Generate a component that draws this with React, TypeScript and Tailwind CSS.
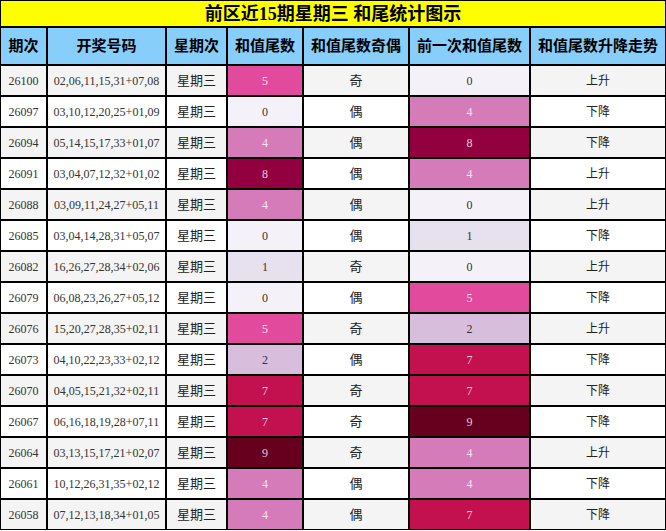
import React from "react";

type Row = [string, string, number, string, number, string];

const rows: Row[] = [
  ["26100", "02,06,11,15,31+07,08", 5, "奇", 0, "上升"],
  ["26097", "03,10,12,20,25+01,09", 0, "偶", 4, "下降"],
  ["26094", "05,14,15,17,33+01,07", 4, "偶", 8, "下降"],
  ["26091", "03,04,07,12,32+01,02", 8, "偶", 4, "上升"],
  ["26088", "03,09,11,24,27+05,11", 4, "偶", 0, "上升"],
  ["26085", "03,04,14,28,31+05,07", 0, "偶", 1, "下降"],
  ["26082", "16,26,27,28,34+02,06", 1, "奇", 0, "上升"],
  ["26079", "06,08,23,26,27+05,12", 0, "偶", 5, "下降"],
  ["26076", "15,20,27,28,35+02,11", 5, "奇", 2, "上升"],
  ["26073", "04,10,22,23,33+02,12", 2, "偶", 7, "下降"],
  ["26070", "04,05,15,21,32+02,11", 7, "奇", 7, "下降"],
  ["26067", "06,16,18,19,28+07,11", 7, "奇", 9, "下降"],
  ["26064", "03,13,15,17,21+02,07", 9, "奇", 4, "上升"],
  ["26061", "10,12,26,31,35+02,12", 4, "偶", 4, "下降"],
  ["26058", "07,12,13,18,34+01,05", 4, "偶", 7, "下降"],
];

const heat: Record<number, string> = {
  0: "bg-[#f4f1f8] text-[#333]",
  1: "bg-[#e7e1ef] text-[#333]",
  2: "bg-[#d8bedd] text-[#333]",
  3: "bg-[#cf9fcc] text-[#333]",
  4: "bg-[#d67bba] text-[#f6e2f0]",
  5: "bg-[#e24a9d] text-[#fbe3ef]",
  6: "bg-[#d8308a] text-[#fbe3ef]",
  7: "bg-[#c3114f] text-[#f4cfdc]",
  8: "bg-[#93003f] text-[#ebc9d6]",
  9: "bg-[#67001f] text-[#e6c6cf]",
};

const td = "border border-black text-center align-middle h-[31px] p-0 leading-none";

export default function App() {
  return (
    <div className="w-[666px] h-[531px] overflow-hidden bg-white" style={{ fontFamily: '"Liberation Serif","Noto Sans CJK SC",serif' }}>
      <table className="w-[666px] table-fixed border-separate border-spacing-0">
        <colgroup>
          <col className="w-[47px]" />
          <col className="w-[119px]" />
          <col className="w-[61px]" />
          <col className="w-[76px]" />
          <col className="w-[106px]" />
          <col className="w-[121px]" />
          <col className="w-[136px]" />
        </colgroup>
        <thead>
          <tr>
            <th colSpan={7} className="border border-black bg-[#ffff00] h-[27px] p-0 text-[18px] font-bold text-black leading-none align-middle">
              前区近15期星期三 和尾统计图示
            </th>
          </tr>
          <tr>
            {["期次", "开奖号码", "星期次", "和值尾数", "和值尾数奇偶", "前一次和值尾数", "和值尾数升降走势"].map((h) => (
              <th key={h} className="border border-black bg-[#87cefa] h-[38px] p-0 text-[15px] font-bold text-black leading-none align-middle whitespace-nowrap">
                {h}
              </th>
            ))}
          </tr>
        </thead>
        <tbody>
          {rows.map((r, i) => {
            const bg = i % 2 === 0 ? "bg-[#f4f4f4]" : "bg-white";
            return (
              <tr key={r[0]}>
                <td className={`${td} ${bg} text-[12px] text-[#333]`}>{r[0]}</td>
                <td className={`${td} ${bg} text-[12px] text-[#333] whitespace-nowrap`}>{r[1]}</td>
                <td className={`${td} ${bg} text-[13px] text-[#222]`}>星期三</td>
                <td className={`${td} ${heat[r[2]]} text-[12px]`}>{r[2]}</td>
                <td className={`${td} ${bg} text-[13px] text-[#222]`}>{r[3]}</td>
                <td className={`${td} ${heat[r[4]]} text-[12px]`}>{r[4]}</td>
                <td className={`${td} ${bg} text-[12px] text-[#222]`}>{r[5]}</td>
              </tr>
            );
          })}
        </tbody>
      </table>
    </div>
  );
}
